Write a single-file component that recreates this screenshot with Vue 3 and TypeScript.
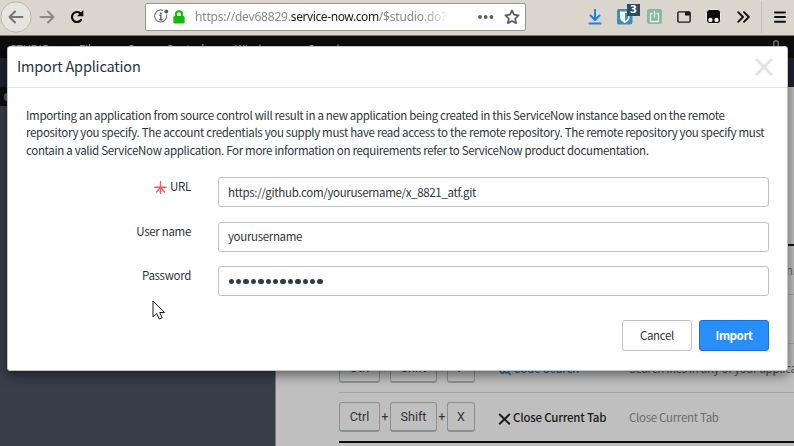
<script setup lang="ts">
interface Shortcut {
  keys: string[]
  action: string
  description: string
  kind: 'tail' | 'empty' | 'search' | 'close'
}

const menu: { label: string; cls: string }[] = [
  { label: 'STUDIO', cls: 'm-studio' },
  { label: 'File', cls: 'm-file' },
  { label: 'Source Control', cls: 'm-source' },
  { label: 'Window', cls: 'm-window' },
  { label: 'Search', cls: 'm-search' },
]

const shortcuts: Shortcut[] = [
  { keys: [], action: '', description: 'n.', kind: 'tail' },
  { keys: [], action: '', description: '', kind: 'empty' },
  { keys: ['Ctrl', 'Shift', 'F'], action: 'Code Search', description: 'Search files in any of your applications', kind: 'search' },
  { keys: ['Ctrl', 'Shift', 'X'], action: 'Close Current Tab', description: 'Close Current Tab', kind: 'close' },
]

const intro: string[] = [
  'Importing an application from source control will result in a new application being created in this ServiceNow instance based on the remote',
  'repository you specify. The account credentials you supply must have read access to the remote repository. The remote repository you specify must',
  'contain a valid ServiceNow application. For more information on requirements refer to ServiceNow product documentation.',
]

const dots = Array.from({ length: 13 }, (_, i) => i)
</script>

<template>
  <div class="window">
    <header class="toolbar">
      <div class="back">
        <svg width="32" height="32" viewBox="0 0 32 32" fill="none">
          <circle cx="16" cy="16" r="15.2" fill="#e6e4df" stroke="#bcb8b0" />
          <path d="M22.5 16H9.5M15 10.5L9.5 16l5.500 5.500" stroke="#77756f" stroke-width="2" stroke-linecap="round" stroke-linejoin="round" />
        </svg>
      </div>
      <svg class="forward" width="16" height="14" viewBox="0 0 16 14" fill="none" stroke="#8b8983" stroke-width="2" stroke-linecap="round" stroke-linejoin="round"><path d="M1.500 7h13M9 1.500L14.500 7 9 12.500" /></svg>
      <svg class="reload" width="16" height="14" viewBox="0 0 16 14" fill="none"><path d="M11.200 3.200A5 5 0 1 0 12.100 9.800" stroke="#0c0c0d" stroke-width="2.200" stroke-linecap="round" /><path d="M14.300 0v6.300H8z" fill="#0c0c0d" /></svg>

      <div class="address">
        <svg class="info" width="15" height="15" viewBox="0 0 15 15" fill="none"><path d="M9 1.400A6 6 0 1 0 12.500 5.500" stroke="#77777a" stroke-width="1.100" /><circle cx="12.300" cy="2.500" r="2" fill="#5c5c5e" /><circle cx="6.800" cy="4.200" r="1" fill="#5c5c5e" /><path d="M5.400 6.200h1.500v4.500M5.200 10.700h3.400" stroke="#5c5c5e" stroke-width="1.400" /></svg>
        <svg class="lock" width="12" height="14" viewBox="0 0 12 14"><path d="M3 7V4.200a3 3 0 0 1 6 0V7" fill="none" stroke="#12bc00" stroke-width="2.100" /><rect x=".4" y="6" width="11.200" height="7.500" rx="1.200" fill="#12bc00" /></svg>
        <div class="url">https://dev68829.<b>service-now.com</b>/$studio.do?</div>
        <svg class="more" width="16" height="4" viewBox="0 0 16 4" fill="#5b5b5d"><circle cx="2" cy="2" r="1.900" /><circle cx="7.700" cy="2" r="1.900" /><circle cx="13.400" cy="2" r="1.900" /></svg>
        <svg class="star" width="16" height="16" viewBox="0 0 16 16" fill="none" stroke="#59595b" stroke-width="1.700" stroke-linejoin="round"><path d="M8 1.400l2 4.300 4.600.6-3.400 3.200.9 4.700L8 11.900l-4.100 2.300.9-4.700L1.400 6.300 6 5.700z" /></svg>
      </div>

      <svg class="download" width="14" height="16" viewBox="0 0 14 16" fill="none" stroke="#1b82f2" stroke-width="2"><path d="M7 .8v9.800M2.500 6.500L7 11l4.500-4.500M1.500 14.600h11" stroke-linecap="round" stroke-linejoin="round" /></svg>
      <div class="shield">
        <svg width="16" height="16" viewBox="0 0 16 16"><rect width="15.500" height="15.500" rx="2" fill="#3c8dbc" /><path d="M3 2.500h9.500V8c0 3-2 4.500-4.700 6C5 12.500 3 11 3 8z" fill="#fff" /><path d="M8 4h3v4c0 1.900-1.100 3-3 4z" fill="#3c8dbc" /></svg>
        <span class="count">3</span>
      </div>
      <svg class="power" width="15" height="15" viewBox="0 0 15 15"><rect width="15" height="15" rx="2" fill="#88b9a0" /><path d="M5.500 4.500H3.500v8h8v-8h-2M7.500 2v6.500" fill="none" stroke="#e2f2e8" stroke-width="1.300" stroke-linejoin="round" /></svg>
      <svg class="tabicon" width="14" height="12" viewBox="0 0 14 12"><rect x=".9" y=".9" width="12.200" height="10.200" rx="1" fill="none" stroke="#161616" stroke-width="1.400" /><path d="M8 1H13v3.500H8z" fill="#161616" /></svg>
      <svg class="monkey" width="15" height="15" viewBox="0 0 15 15"><rect x=".5" y=".5" width="14" height="14" rx="3" fill="#0b0b0b" stroke="#eeeae4" /><circle cx="4.400" cy="10.900" r="2.200" fill="#f1eee8" /><circle cx="10.500" cy="10.900" r="2.200" fill="#f1eee8" /></svg>
      <svg class="chevrons" width="13" height="12" viewBox="0 0 13 12" fill="none" stroke="#111" stroke-width="1.900" stroke-linejoin="round" stroke-linecap="round"><path d="M1.200 1.200L6 6l-4.800 4.800M7 1.200L11.800 6 7 10.800" /></svg>
      <div class="divider"></div>
      <svg class="hamburger" width="12" height="12" viewBox="0 0 12 12" stroke="#111" stroke-width="2" stroke-linecap="round"><path d="M1 1.500h10M1 6.100h10M1 10.700h10" /></svg>
    </header>

    <main class="studio">
      <nav class="menubar">
        <span v-for="item in menu" :key="item.label" :class="item.cls">{{ item.label }}</span>
        <svg class="user" width="10" height="12" viewBox="0 0 10 12" fill="none" stroke="#8b8b8b" stroke-width="1.200"><rect x="2.800" y=".8" width="4.400" height="6" rx="2" /></svg>
      </nav>
      <div class="subbar"></div>
      <div class="workspace">
        <aside class="sidebar"><div class="tab"><i></i></div></aside>
        <section class="content">
          <div v-for="(row, r) in shortcuts" :key="r" class="row" :class="row.kind">
            <div class="keys">
              <template v-for="(k, i) in row.keys" :key="k">
                <em v-if="i > 0">+</em>
                <kbd :class="'k' + i">{{ k }}</kbd>
              </template>
            </div>
            <div class="action">
              <svg v-if="row.kind === 'close'" width="13" height="12" viewBox="0 0 13 12" fill="none" stroke="#1b1b1b" stroke-width="1.900"><path d="M1.200 1l10.600 10.300M11.800 1L1.200 11.300" /></svg>
              <svg v-if="row.kind === 'search'" width="13" height="12" viewBox="0 0 13 12" fill="none" stroke="#2c66b3" stroke-width="1.300"><path d="M3.500 2L1 5.500 3.500 9H6" /><circle cx="8.500" cy="6" r="2.800" /><path d="M10.300 8.300l2.200 2.700" /></svg>
              <span>{{ row.action }}</span>
            </div>
            <div class="desc">{{ row.description }}</div>
          </div>
        </section>
      </div>
    </main>

    <div class="dialog">
      <div class="dialog-head">
        <h1>Import Application</h1>
        <svg width="18" height="18" viewBox="0 0 18 18" stroke="#e3e3e3" stroke-width="2.800" stroke-linecap="round"><path d="M2 2l14 14M16 2L2 16" /></svg>
      </div>
      <div class="dialog-body">
        <div class="intro"><div v-for="(line, i) in intro" :key="i" :class="'l' + i">{{ line }}</div></div>
        <div class="field">
          <label><svg width="13" height="13" viewBox="0 0 13 13" stroke="#f25b5b" stroke-linecap="round"><path d="M6.500 .8v11.400M.8 6.200h11.400" stroke-width="1.400" /><path d="M6.500 6.200L2.600 11M6.500 6.200l3.900 4.800" stroke-width="1.300" /></svg><span>URL</span></label>
          <div class="input"><span class="v-url">https://github.com/yourusername/x_8821_atf.git</span></div>
        </div>
        <div class="field">
          <label><span>User name</span></label>
          <div class="input"><span>yourusername</span></div>
        </div>
        <div class="field">
          <label><span>Password</span></label>
          <div class="input secret"><i v-for="d in dots" :key="d"></i></div>
        </div>
        <div class="buttons">
          <button class="cancel">Cancel</button>
          <button class="primary">Import</button>
        </div>
      </div>
    </div>

    <svg class="cursor" width="14" height="21" viewBox="0 0 14 21"><path d="M1 1v16l3.700-3.500L7.200 19l3-1.300-2.500-5.200h4.800z" fill="#fff" stroke="#16162c" stroke-width="1" /></svg>
  </div>
</template>

<style>
body { margin: 0; overflow: hidden; }
</style>

<style scoped>
* { box-sizing: border-box; }
svg { display: block; flex: none; }
.window { position: relative; width: 794px; height: 446px; overflow: hidden; font-family: "Noto Sans CJK SC", "Noto Sans", sans-serif; }
.toolbar { display: flex; align-items: center; height: 36px; padding-bottom: 2px; background: #dad6ce; border-bottom: 1px solid #77756f; }
.back { width: 32px; height: 32px; }
.forward { margin-left: 7px; }
.reload { margin-left: 14px; }
.address { display: flex; align-items: center; width: 381px; height: 28px; margin-left: 60px; background: #fff; border: 1px solid #98958f; border-radius: 2px; }
.info { margin-left: 8px; }
.lock { margin-left: 4px; }
.url { width: 256px; margin-left: 10px; font: 12px/20px "Noto Sans", sans-serif; letter-spacing: -.18px; color: #85888a; white-space: nowrap; overflow: hidden; -webkit-mask-image: linear-gradient(90deg, #000 225px, transparent 256px); mask-image: linear-gradient(90deg, #000 225px, transparent 256px); }
.url b { font-weight: 400; color: #1b1b1d; letter-spacing: -.4px; }
.more { margin-left: 27px; }
.star { margin-left: 10px; }
.download { margin-left: 62px; }
.shield { position: relative; margin-left: 15px; }
.count { position: absolute; left: 10px; top: -5px; width: 13px; height: 12px; background: #2b4d60; color: #fff; font: bold 10px/12px "DejaVu Sans", sans-serif; text-align: center; }
.power { margin-left: 14px; }
.tabicon { margin-left: 15px; }
.monkey { margin-left: 15px; }
.chevrons { margin-left: 16px; }
.divider { width: 1px; height: 32px; margin-left: 11px; background: #c6c2bb; }
.hamburger { margin-left: 12px; }

.studio { height: 410px; }
.menubar { display: flex; height: 22px; padding: 4px 13px 0 10px; background: #0d0d0d; color: #a0a0a0; font-size: 11px; line-height: 16px; white-space: nowrap; }
.menubar span { flex: none; }
.m-studio { width: 69px; }
.m-file { width: 49px; }
.m-source { width: 107px; }
.m-window { width: 73px; }
.m-search { width: 60px; }
.user { margin-left: auto; }
.subbar { height: 29px; background: #1c222e; }
.workspace { display: flex; height: 359px; }
.sidebar { flex: none; width: 276px; background: #383e4a; border-right: 1px solid #777b80; }
.tab { height: 19px; padding: 6px 0 0 4px; background: #0d0d0d; }
.tab i { display: block; width: 6px; height: 8px; border-radius: 4px; background: #48606a; }
.content { flex: 1; padding: 157px 0 0 63px; background: #bfbfbf; overflow: hidden; }
.row { display: flex; align-items: center; width: 470px; height: 49px; border-bottom: 1px solid #a4a4a4; }
.row.tail { height: 51px; border-top: 2px solid #111; }
.row.search { height: 49px; }
.row.close { height: 50px; border-bottom: 2px solid #0d0d0d; }
.keys { flex: none; display: flex; align-items: center; width: 159px; }
.keys em { width: 10px; font: 12px/16px Roboto, sans-serif; text-align: center; color: #333; }
kbd { height: 30px; border: 1px solid #8d9090; border-bottom-width: 2px; border-radius: 3px; font: 12.500px/27px Roboto, "Liberation Sans", sans-serif; color: #333; text-align: center; }
.k0 { width: 41px; }
.k1 { width: 47px; }
.k2 { width: 28px; }
.action { flex: none; display: flex; align-items: center; width: 131px; font-size: 11.500px; font-weight: 500; letter-spacing: -.22px; color: #1b1b1b; white-space: nowrap; }
.action span { margin-left: 2px; }
.action svg { margin-top: 3px; }
.search .action { color: #2c66b3; }
.desc { font-size: 11.500px; letter-spacing: -.3px; color: #6c6c6c; white-space: nowrap; }
.search .desc { color: #555; }
.tail .desc { margin-left: 157px; }

.dialog { position: absolute; left: 7px; top: 46px; width: 781px; height: 325px; background: #fff; border: 1px solid #c4c6c7; border-radius: 3px; box-shadow: 0 4px 12px rgba(0, 0, 0, .5); color: #2b343e; }
.dialog-head { display: flex; align-items: center; justify-content: space-between; height: 41px; padding: 0 14px 0 9px; border-bottom: 1px solid #e6e7e8; }
h1 { margin: 0; padding-bottom: 2px; font-size: 14.500px; font-weight: 400; line-height: 20px; letter-spacing: -.19px; white-space: nowrap; }
.dialog-body { padding: 19px 18px 0; }
.intro { height: 70px; font-size: 11.500px; line-height: 17.300px; letter-spacing: -.318px; white-space: nowrap; }
.field { display: flex; height: 44.500px; }
label { display: flex; justify-content: flex-end; width: 165px; height: 18px; font-size: 11.500px; line-height: 18px; letter-spacing: -.32px; }
label svg { margin: 4px 3px 0 0; }
.input { display: flex; align-items: center; width: 551px; height: 30px; margin-left: 27px; padding: 0 0 1px 9px; border: 1px solid #bfc3c5; border-radius: 3px; font-size: 11.500px; line-height: 18px; letter-spacing: -.33px; }
.secret { padding: 1px 0 0 9.500px; }
.secret i { width: 5.500px; height: 5.500px; margin-right: 1.920px; border-radius: 50%; background: #2e3d49; }
.buttons { display: flex; justify-content: flex-end; gap: 7px; margin-top: 9px; }
button { width: 70px; height: 31px; padding: 0; border: 1px solid #bfc3c5; border-radius: 3px; background: #fff; color: #2b343e; font-family: inherit; font-size: 11.500px; line-height: 28px; letter-spacing: -.32px; }
.primary { background: #278efc; border-color: #1973d2; color: #fff; font-weight: 700; letter-spacing: -.4px; }
.cursor { position: absolute; left: 152px; top: 300px; }
</style>
